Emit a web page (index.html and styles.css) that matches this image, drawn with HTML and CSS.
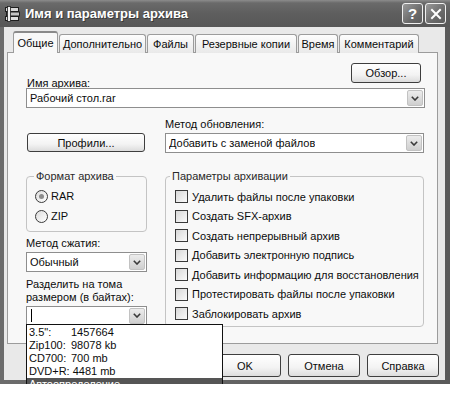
FILE: index.html
```html
<!DOCTYPE html>
<html lang="ru">
<head>
<meta charset="utf-8">
<title>Имя и параметры архива</title>
<link rel="stylesheet" href="styles.css">
</head>
<body>
<div class="window">
  <div class="titlebar">
    <svg class="app-icon" viewBox="0 0 18 18" width="18" height="18">
      <rect x="2.5" y="2.5" width="13" height="4" fill="#d8d8d8" stroke="#1e1e1e"/>
      <rect x="3.5" y="7" width="13" height="4" fill="#c4c4c4" stroke="#1e1e1e"/>
      <rect x="2.5" y="11.5" width="13" height="4" fill="#dedede" stroke="#1e1e1e"/>
      <rect x="4.5" y="1.5" width="3" height="15" fill="#f2f2f2" stroke="#1e1e1e" stroke-width="0.8"/>
    </svg>
    <span class="title">Имя и параметры архива</span>
    <span class="cap-btn help">?</span>
    <span class="cap-btn close">
      <svg viewBox="0 0 12 12" width="12" height="12"><path d="M2 2L10 10M10 2L2 10" stroke="#fff" stroke-width="2" stroke-linecap="square"/></svg>
    </span>
  </div>
  <div class="client">
    <div class="tabs">
      <div class="tab active">Общие</div>
      <div class="tab">Дополнительно</div>
      <div class="tab">Файлы</div>
      <div class="tab">Резервные копии</div>
      <div class="tab">Время</div>
      <div class="tab">Комментарий</div>
    </div>
    <div class="panel">
      <div class="name-row">
        <span class="label name-label">Имя архива:</span>
        <div class="btn browse">Обзор...</div>
      </div>
      <div class="combo name-combo">
        <span class="combo-text">Рабочий стол.rar</span>
        <span class="combo-arrow"><svg viewBox="0 0 8 5" width="8" height="5"><path d="M0.8 0.8L4 4L7.2 0.8" fill="none" stroke="#3a3a3a" stroke-width="1.6"/></svg></span>
      </div>
      <div class="grid">
        <div class="spacer"></div>
        <div class="label">Метод обновления:</div>
        <div class="btn profiles">Профили...</div>
        <div class="combo">
          <span class="combo-text">Добавить с заменой файлов</span>
          <span class="combo-arrow"><svg viewBox="0 0 8 5" width="8" height="5"><path d="M0.8 0.8L4 4L7.2 0.8" fill="none" stroke="#3a3a3a" stroke-width="1.6"/></svg></span>
        </div>
        <div class="left-col">
          <fieldset class="group format">
            <legend>Формат архива</legend>
            <div class="opt-row radio-row"><span class="radio on"></span>RAR</div>
            <div class="opt-row radio-row"><span class="radio"></span>ZIP</div>
          </fieldset>
          <div class="label method-label">Метод сжатия:</div>
          <div class="combo small-combo">
            <span class="combo-text">Обычный</span>
            <span class="combo-arrow"><svg viewBox="0 0 8 5" width="8" height="5"><path d="M0.8 0.8L4 4L7.2 0.8" fill="none" stroke="#3a3a3a" stroke-width="1.6"/></svg></span>
          </div>
          <div class="label split-label">Разделить на тома<br>размером (в байтах):</div>
          <div class="combo split-combo">
            <span class="caret"></span>
            <span class="combo-arrow"><svg viewBox="0 0 8 5" width="8" height="5"><path d="M0.8 0.8L4 4L7.2 0.8" fill="none" stroke="#3a3a3a" stroke-width="1.6"/></svg></span>
            <div class="droplist">
              <div class="drop-item"><span class="drop-key">3.5":</span>1457664</div>
              <div class="drop-item"><span class="drop-key">Zip100:</span>98078 kb</div>
              <div class="drop-item"><span class="drop-key">CD700:</span>700 mb</div>
              <div class="drop-item"><span class="drop-key">DVD+R:</span>4481 mb</div>
              <div class="drop-item selected">Автоопределение</div>
            </div>
          </div>
        </div>
        <fieldset class="group params">
          <legend>Параметры архивации</legend>
          <div class="opt-row"><span class="check"></span>Удалить файлы после упаковки</div>
          <div class="opt-row"><span class="check"></span>Создать SFX-архив</div>
          <div class="opt-row"><span class="check"></span>Создать непрерывный архив</div>
          <div class="opt-row"><span class="check"></span>Добавить электронную подпись</div>
          <div class="opt-row"><span class="check"></span>Добавить информацию для восстановления</div>
          <div class="opt-row"><span class="check"></span>Протестировать файлы после упаковки</div>
          <div class="opt-row"><span class="check"></span>Заблокировать архив</div>
        </fieldset>
      </div>
    </div>
    <div class="actions">
      <div class="btn action">OK</div>
      <div class="btn action">Отмена</div>
      <div class="btn action">Справка</div>
    </div>
  </div>
</div>
</body>
</html>
```
FILE: styles.css
```css
* { box-sizing: border-box; }
html, body { margin: 0; padding: 0; background: #fff; }
body {
  font-family: "Liberation Sans", Arial, sans-serif;
  font-size: 11px;
  color: #0c0c0c;
}
.window {
  width: 450px;
  height: 384px;
  background: linear-gradient(90deg, #6c6c6c, #5a5a5a);
  display: flex;
  flex-direction: column;
}
.titlebar {
  height: 27px;
  flex: none;
  display: flex;
  align-items: center;
  padding: 0 4px 0 3px;
  background: linear-gradient(#8c8c8c, #6a6a6a 3px, #5e5e5e 50%, #575757);
  color: #fff;
}
.app-icon { flex: none; margin-right: 4px; }
.title {
  flex: 1;
  font-weight: bold;
  font-size: 13px;
  text-shadow: 1px 1px 0 #3a3a3a;
}
.cap-btn {
  width: 21px;
  height: 21px;
  margin-left: 2px;
  border: 1px solid #f0f0f0;
  border-radius: 3px;
  background: linear-gradient(135deg, #9a9a9a, #6a6a6a 60%, #5c5c5c);
  display: flex;
  align-items: center;
  justify-content: center;
  color: #fff;
  font-weight: bold;
  font-size: 15px;
}
.client {
  flex: 1;
  margin: 0 5px 4px 4px;
  background: #e9e9e9;
  display: flex;
  flex-direction: column;
  padding: 4px 7px 0 3px;
}
.tabs {
  display: flex;
  align-items: flex-end;
  height: 22px;
  padding-left: 6px;
  margin-bottom: -1px;
  position: relative;
  z-index: 1;
}
.tab {
  height: 19px;
  margin-right: 1px;
  border: 1px solid #9c9c9c;
  border-bottom: none;
  border-radius: 3px 3px 0 0;
  background: linear-gradient(#fdfdfd, #e9e9e9);
  display: flex;
  align-items: center;
  justify-content: center;
  white-space: nowrap;
}
.tab:nth-child(1) { width: 45px; }
.tab:nth-child(2) { width: 87px; }
.tab:nth-child(3) { width: 47px; }
.tab:nth-child(4) { width: 102px; }
.tab:nth-child(5) { width: 40px; }
.tab:nth-child(6) { width: 80px; }
.tab.active {
  height: 22px;
  background: #f8f8f8;
  border-top: 2px solid #8a8a8a;
}
.panel {
  height: 292px;
  flex: none;
  border: 1px solid #9c9c9c;
  background: #f8f8f8;
  padding: 10px 12px 0 18px;
}
.label { line-height: 14px; white-space: nowrap; }
.name-row {
  display: flex;
  justify-content: space-between;
  align-items: flex-end;
}
.name-label { margin-bottom: -7px; padding-left: 1px; }
.btn {
  height: 20px;
  border: 1px solid #3e3e3e;
  border-radius: 3px;
  background: linear-gradient(#ffffff, #f3f3f3 60%, #dcdcdc);
  display: flex;
  align-items: center;
  justify-content: center;
  white-space: nowrap;
}
.browse { width: 70px; margin-right: 4px; }
.combo {
  height: 20px;
  border: 1px solid #8e8e8e;
  background: #fff;
  display: flex;
  align-items: center;
  padding-left: 3px;
  position: relative;
}
.name-combo { margin-top: 5px; }
.combo-text { white-space: nowrap; overflow: hidden; }
.combo-arrow {
  margin-left: auto;
  margin-right: 1px;
  width: 16px;
  height: 16px;
  flex: none;
  border: 1px solid #c2c2c2;
  border-radius: 2px;
  background: linear-gradient(#ececec, #cfcfcf);
  display: flex;
  align-items: center;
  justify-content: center;
}
.grid {
  display: grid;
  grid-template-columns: 121px 259px;
  column-gap: 18px;
  row-gap: 2px;
  margin-top: 9px;
}
.profiles { height: 19px; margin-left: 1px; margin-right: 2px; }
.group {
  margin: 0;
  border: 1px solid #c4c4c4;
  border-radius: 4px;
  min-width: 0;
}
.grid .left-col, .grid .params { margin-top: 14px; }
.group legend {
  padding: 0 2px;
  line-height: 14px;
  color: #2a2a2a;
}
.format { padding: 3px 4px 5px 6px; }
.format legend { margin-left: 1px; }
.opt-row {
  display: flex;
  align-items: center;
  white-space: nowrap;
}
.radio-row { height: 20px; padding-left: 2px; }
.radio {
  width: 13px;
  height: 13px;
  border: 1px solid #3a3a3a;
  border-radius: 50%;
  background: linear-gradient(135deg, #dcdcdc, #fff);
  margin-right: 3px;
  display: flex;
  align-items: center;
  justify-content: center;
}
.radio.on::after {
  content: "";
  width: 5px;
  height: 5px;
  border-radius: 50%;
  background: #8c8c8c;
}
.method-label { margin-top: 4px; }
.small-combo { margin-top: 2px; }
.split-label { margin-top: 6px; line-height: 13px; }
.split-combo { margin-top: 2px; height: 19px; }
.caret {
  width: 1px;
  height: 13px;
  background: #000;
  margin-left: 1px;
}
.droplist {
  position: absolute;
  left: -1px;
  top: 100%;
  width: 197px;
  border: 1px solid #111;
  background: #fff;
  z-index: 5;
  padding-top: 1px;
  padding-bottom: 6px;
}
.drop-item {
  height: 13px;
  line-height: 13px;
  padding-left: 2px;
  white-space: nowrap;
}
.drop-key { display: inline-block; min-width: 42px; padding-right: 3px; }
.drop-item.selected {
  background: #555;
  color: #fff;
  height: 14px;
  line-height: 13px;
}
.params { padding: 4px 4px 2px 9px; }
.params legend { margin-left: -5px; }
.params .opt-row { height: 19.5px; }
.check {
  width: 13px;
  height: 13px;
  flex: none;
  border: 1px solid #3a3a3a;
  background: linear-gradient(135deg, #d8d8d8, #fafafa);
  margin-right: 4px;
}
.actions {
  display: flex;
  justify-content: flex-end;
  gap: 7px;
  margin-top: 10px;
  margin-right: -1px;
}
.action { width: 72px; height: 23px; }
```
